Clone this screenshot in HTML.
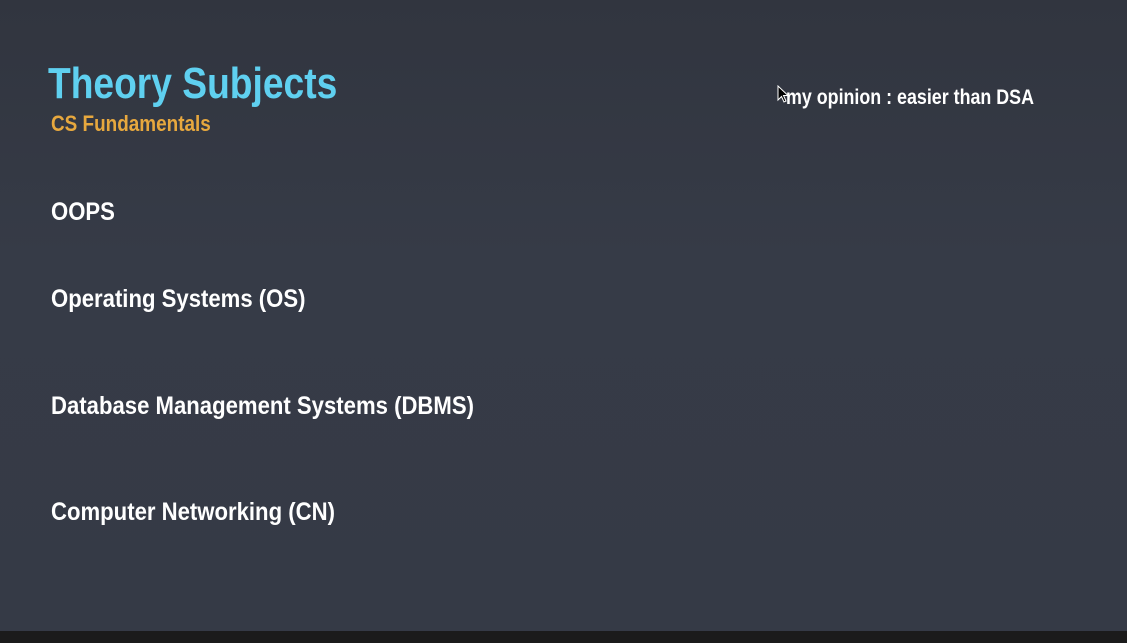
<!DOCTYPE html>
<html><head><style>
html,body{margin:0;padding:0;}
body{width:1127px;height:643px;overflow:hidden;background:linear-gradient(180deg,#31353f 0%,#363b47 40%,#353a46 100%);position:relative;font-family:"Liberation Sans",sans-serif;font-weight:bold;}
.t{position:absolute;white-space:nowrap;line-height:1;transform-origin:0 0;}
.bar{position:absolute;left:0;top:631px;width:1127px;height:12px;background:#1b1b1b;}
</style></head><body>
<div class="t" style="left:48px;top:62px;font-size:44px;color:#5fd0f0;transform:scaleX(0.845);">Theory Subjects</div>
<div class="t" style="left:51px;top:113px;font-size:22px;color:#e7a83e;transform:scaleX(0.86);">CS Fundamentals</div>
<div class="t" style="left:786px;top:87px;font-size:21px;color:#ffffff;transform:scaleX(0.85);">my opinion : easier than DSA</div>
<svg style="position:absolute;left:777px;top:85px" width="12" height="18" viewBox="0 0 12 18"><path d="M1 1 L1 15 L4.5 11.5 L7 17 L9 16 L6.5 10.5 L11 10.5 Z" fill="#000" stroke="#fff" stroke-width="1"/></svg>
<div class="t" style="left:51px;top:200px;font-size:25px;color:#fff;transform:scaleX(0.885);">OOPS</div>
<div class="t" style="left:51px;top:287px;font-size:25px;color:#fff;transform:scaleX(0.885);">Operating Systems (OS)</div>
<div class="t" style="left:51px;top:394px;font-size:25px;color:#fff;transform:scaleX(0.885);">Database Management Systems (DBMS)</div>
<div class="t" style="left:51px;top:500px;font-size:25px;color:#fff;transform:scaleX(0.885);">Computer Networking (CN)</div>
<div class="bar"></div>
</body></html>
